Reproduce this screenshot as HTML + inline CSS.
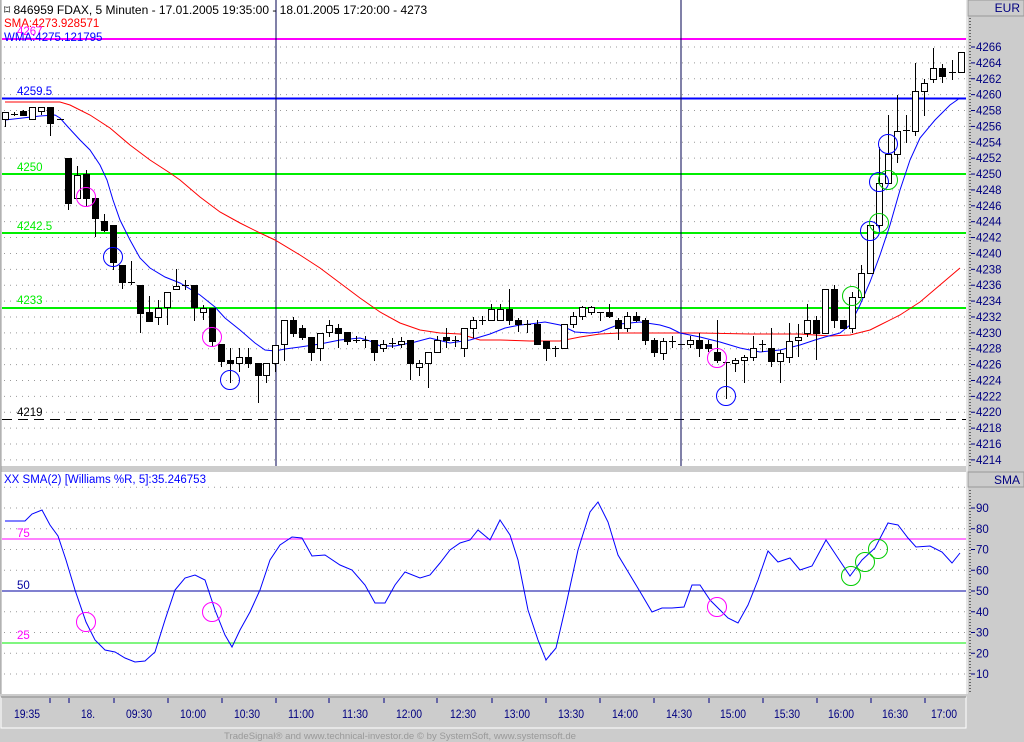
<!DOCTYPE html>
<html><head><meta charset="utf-8"><style>
html,body{margin:0;padding:0;background:#cccccc;width:1024px;height:742px;overflow:hidden}
svg{display:block;font-family:"Liberation Sans",sans-serif}
</style></head><body>
<svg id="s" width="1024" height="742" viewBox="0 0 1024 742" xmlns="http://www.w3.org/2000/svg">
<rect x="0" y="0" width="1024" height="742" fill="#cccccc"/>
<rect x="1" y="0" width="965" height="466" fill="#fff"/>
<rect x="1" y="472" width="965" height="222" fill="#fff"/>
<line x1="1" y1="0" x2="1" y2="694" stroke="#999"/>
<line x1="967" y1="0" x2="967" y2="694" stroke="#fff"/>
<g id="grid"></g>
<!-- axis boxes -->
<rect x="968" y="0" width="56" height="16" fill="#cccccc" stroke="#999"/>
<text x="1020" y="12" font-size="12" fill="#000080" text-anchor="end">EUR</text>
<rect x="968" y="472" width="56" height="15" fill="#cccccc" stroke="#999"/>
<text x="1020" y="484" font-size="12" fill="#000080" text-anchor="end">SMA</text>
<g id="axis"></g>
<!-- time axis -->
<rect x="1" y="697" width="965" height="31" fill="#cccccc" stroke="#fff"/>
<line x1="1" y1="697" x2="966" y2="697" stroke="#888"/>
<g id="time"></g>
<text x="400" y="739" font-size="9.5" fill="#999" text-anchor="middle" textLength="352" lengthAdjust="spacingAndGlyphs">TradeSignal® and www.technical-investor.de © by SystemSoft, www.systemsoft.de</text>
<!-- horizontal levels -->
<line x1="2" y1="39" x2="966" y2="39" stroke="#ff00ff" stroke-width="2"/>
<line x1="2" y1="98.5" x2="966" y2="98.5" stroke="#0000ff" stroke-width="2"/>
<line x1="2" y1="174" x2="966" y2="174" stroke="#00ee00" stroke-width="2"/>
<line x1="2" y1="233" x2="966" y2="233" stroke="#00ee00" stroke-width="2"/>
<line x1="2" y1="308" x2="966" y2="308" stroke="#00ee00" stroke-width="2"/>
<line x1="2" y1="419.5" x2="966" y2="419.5" stroke="#000" stroke-dasharray="10,6"/>
<line x1="276" y1="0" x2="276" y2="466" stroke="#000050"/>
<line x1="681" y1="0" x2="681" y2="466" stroke="#000050"/>
<text x="4" y="14" font-size="12" fill="#000">⌑ 846959  FDAX, 5 Minuten - 17.01.2005 19:35:00 - 18.01.2005 17:20:00 - 4273</text>
<text x="4" y="27" font-size="11.5" fill="#ff0000">SMA:4273.928571</text>
<text x="17" y="35" font-size="11.5" fill="#ff00ff">4267</text>
<text x="4" y="41" font-size="11.5" fill="#0000ff">WMA:4275.121795</text>
<text x="17" y="95" font-size="11.5" fill="#0000ff">4259.5</text>
<text x="17" y="171" font-size="11.5" fill="#00ee00">4250</text>
<text x="17" y="230" font-size="11.5" fill="#00ee00">4242.5</text>
<text x="17" y="304" font-size="11.5" fill="#00ee00">4233</text>
<text x="17" y="416" font-size="11.5" fill="#000">4219</text>
<g id="lines"></g>
<g id="candles"></g>
<g id="circ"></g>
<!-- indicator -->
<text x="4" y="483" font-size="11.5" fill="#0000ff">XX SMA(2) [Williams %R, 5]:35.246753</text>
<line x1="2" y1="539" x2="966" y2="539" stroke="#ff00ff"/>
<line x1="2" y1="591" x2="966" y2="591" stroke="#0000a0"/>
<line x1="2" y1="643" x2="966" y2="643" stroke="#00ee00"/>
<text x="17" y="537" font-size="11.5" fill="#ff00ff">75</text>
<text x="17" y="589" font-size="11.5" fill="#0000a0">50</text>
<text x="17" y="639" font-size="11.5" fill="#ff00ff">25</text>
<g id="ind"></g>
</svg>
<script>
var NS="http://www.w3.org/2000/svg";
function el(g,t,a,txt){var e=document.createElementNS(NS,t);for(var k in a)e.setAttribute(k,a[k]);if(txt!=null)e.textContent=txt;document.getElementById(g).appendChild(e);return e;}
// grid
for(var p=4266;p>=4214;p-=2){var y=47+(4266-p)*7.94;el("grid","line",{x1:4,y1:y,x2:966,y2:y,stroke:"#999","stroke-dasharray":"1,5"});
el("axis","line",{x1:971,y1:y,x2:975,y2:y,stroke:"#000080"});
el("axis","text",{x:976,y:y+4,"font-size":"11.5",fill:"#000080"},""+p);}
for(var p=4268;p>=4216;p-=2){var y=47+(4266-p)*7.94-7.94;}
el("axis","line",{x1:970,y1:18,x2:970,y2:466,stroke:"#000","stroke-dasharray":"1,2"});
for(var v=100;v>=10;v-=10){var y=508+(90-v)*2.075;el("grid","line",{x1:4,y1:y,x2:966,y2:y,stroke:"#999","stroke-dasharray":"1,5"});
if(v<100){el("axis","line",{x1:971,y1:y,x2:975,y2:y,stroke:"#000080"});el("axis","text",{x:976,y:y+4,"font-size":"11.5",fill:"#000080"},""+v);}}
el("axis","line",{x1:970,y1:490,x2:970,y2:694,stroke:"#000","stroke-dasharray":"1,2"});
// time axis
[50,69,114,168,222,276,329,384,437,492,546,600,654,709,763,817,871,925].forEach(function(x){el("time","line",{x1:x,y1:698,x2:x,y2:703,stroke:"#000080"});});
[[27,"19:35"],[88,"18."],[139,"09:30"],[193,"10:00"],[247,"10:30"],[301,"11:00"],[355,"11:30"],[409,"12:00"],[463,"12:30"],[517,"13:00"],[571,"13:30"],[625,"14:00"],[679,"14:30"],[733,"15:00"],[787,"15:30"],[841,"16:00"],[895,"16:30"],[944,"17:00"]].forEach(function(a){el("time","text",{x:a[0],y:718,"font-size":"12",fill:"#000080","text-anchor":"middle",textLength:a[1].length>3?26:14,lengthAdjust:"spacingAndGlyphs"},a[1]);});
function poly(g,pts,c,w){el(g,"polyline",{points:pts.map(function(p){return p.join(",")}).join(" "),fill:"none",stroke:c,"stroke-width":w||1});}
poly("lines",[[5,102],[60,102],[70,105],[90,115],[110,128],[130,145],[150,160],[170,173],[180,180],[200,197],[220,212],[240,223],[260,233],[275,240],[300,255],[320,268],[340,283],[360,298],[380,312],[400,323],[420,330],[440,333],[460,334],[480,340],[500,340],[530,341],[560,341],[580,337],[600,334],[620,333],[650,333],[700,333],[750,334],[800,334],[830,336],[850,335],[870,330],[880,325],[900,315],[920,302],[940,285],[960,268]],"#ff0000");
poly("lines",[[5,120],[40,116],[55,115],[60,118],[68,127],[80,140],[90,150],[100,165],[107,180],[113,200],[120,220],[130,240],[140,258],[150,268],[165,277],[180,283],[200,295],[215,307],[225,318],[240,330],[255,343],[265,350],[275,351],[285,349],[300,347],[320,344],[330,342],[340,340],[360,338],[370,341],[380,346],[395,346],[415,342],[430,338],[450,343],[470,340],[490,334],[505,328],[520,325],[530,324],[545,322],[560,325],[575,332],[590,333],[600,332],[610,328],[620,324],[640,322],[660,325],[670,328],[680,333],[700,337],[720,342],[740,348],[760,352],[780,350],[800,345],[815,340],[825,337],[840,333],[850,325],[860,305],[870,282],[880,255],[890,225],[900,190],[910,160],[920,138],[935,120],[950,105],[960,98]],"#0000ff");
// candles: x, wickTop, wickBot, bodyTop, bodyBot, filled
var C=[[5,112,127,112,119,0],[14,112,116,114,114,0],[23,110,116,111,115,1],[32,107,119,107,119,0],[41,107,115,107,111,0],[50,107,136,107,123,1],[60,119,119,119,119,0],
[68,158,210,158,203,1],[77,166,198,175,198,0],[86,170,207,174,198,1],[95,198,237,198,218,1],[104,214,232,221,230,1],[113,225,270,225,262,1],[122,265,289,265,282,1],[131,261,285,282,282,0],[140,285,333,285,313,1],[149,296,321,312,321,1],[158,300,325,308,317,0],[167,292,325,292,307,0],[176,269,289,286,289,0],[185,280,290,285,285,0],[194,285,321,285,307,1],[203,305,320,308,312,0],[212,308,347,308,341,1],[221,344,367,344,361,1],[230,348,383,360,363,1],[239,348,372,357,363,0],[248,348,368,357,363,1],[258,363,403,363,375,1],[266,363,383,363,375,0],[275,345,372,345,363,0],[284,320,361,320,344,0],[293,317,337,320,333,1],[302,325,340,328,337,1],[311,337,361,337,352,1],[320,333,361,333,348,0],[329,320,337,325,332,0],[338,324,348,328,333,1],[347,332,345,332,341,1],[356,336,343,340,340,0],[365,336,348,340,340,0],[374,340,361,340,352,1],[383,340,352,344,348,0],[392,338,348,343,343,0],[401,337,348,341,344,0],[410,340,380,340,363,1],[419,360,376,363,367,0],[428,352,388,352,363,0],[437,336,352,340,352,0],[446,328,348,337,340,1],[455,336,347,340,340,0],[464,328,357,328,348,0],[473,317,338,320,328,0],[482,316,325,320,320,0],[491,304,320,309,320,0],[500,304,320,309,320,0],[509,289,325,309,320,1],[518,318,332,320,324,1],[527,320,333,324,324,0],[537,320,344,324,344,1],[546,341,361,341,348,1],[555,346,357,348,348,0],[564,324,348,324,348,0],[573,312,328,316,324,0],[582,306,320,307,316,0],[591,306,315,307,312,0],[600,312,321,312,312,0],[609,304,318,312,316,1],[618,318,340,320,328,1],[627,312,332,316,328,0],[636,312,322,316,320,1],[645,318,345,320,340,1],[654,338,357,340,352,1],[663,338,360,341,353,0],[672,336,348,341,341,0],[681,344,344,344,344,0],[690,336,348,340,344,0],[699,333,357,340,348,1],[708,340,352,344,348,1],[717,320,363,352,360,1],[726,362,399,362,362,0],[735,358,372,360,363,0],[744,355,383,357,360,0],[753,336,361,348,357,0],[762,340,352,344,344,0],[771,328,367,348,361,1],[780,350,383,353,361,0],[789,323,363,341,357,0],[798,324,357,337,340,0],[807,304,337,320,333,0],[816,316,360,320,333,1],[825,289,333,289,333,0],[834,285,328,289,320,1],[843,320,328,320,328,1],[852,292,333,297,328,0],[861,265,297,273,297,0],[870,225,273,225,273,0],[879,147,230,183,225,0],[888,115,183,154,183,0],[897,95,163,131,154,0],[906,115,143,130,130,0],[915,63,136,91,131,0],[924,79,116,83,91,0],[933,48,83,68,79,0],[942,64,83,68,76,1],[952,60,80,72,72,0],[961,52,72,52,72,0]];
C.forEach(function(c){var x=c[0];el("candles","line",{x1:x+.5,y1:c[1],x2:x+.5,y2:c[2],stroke:"#000"});
if(c[4]-c[3]<1){el("candles","line",{x1:x-3,y1:c[3]+.5,x2:x+4,y2:c[3]+.5,stroke:"#000"});}
else el("candles","rect",{x:x-2.5,y:c[3]+.5,width:6,height:c[4]-c[3],fill:c[5]?"#000":"#fff",stroke:"#000"});});
function ci(g,x,y,c){el(g,"circle",{cx:x,cy:y,r:9.5,fill:"none",stroke:c});}
[[86,197],[212,337],[717,358]].forEach(function(p){ci("circ",p[0],p[1],"#ff00ff")});
[[113,257],[230,380],[726,396],[888,144],[879,182],[870,231]].forEach(function(p){ci("circ",p[0],p[1],"#0000ff")});
[[852,296],[879,223],[888,180]].forEach(function(p){ci("circ",p[0],p[1],"#00cc00")});
poly("ind",[[5,521],[25,521],[32,514],[42,510],[50,525],[58,536],[66,560],[75,590],[86,622],[95,640],[105,650],[115,652],[125,658],[135,662],[145,661],[155,652],[165,620],[175,590],[185,578],[195,575],[205,580],[215,610],[225,635],[232,647],[240,630],[250,612],[260,590],[270,560],[280,545],[292,537],[302,538],[312,556],[325,555],[340,565],[352,570],[365,585],[375,603],[385,603],[395,585],[405,572],[420,578],[430,575],[440,563],[450,550],[460,543],[470,540],[478,530],[490,540],[500,520],[510,535],[518,560],[528,610],[538,640],[546,660],[556,648],[566,605],[578,550],[590,512],[598,502],[608,522],[618,555],[630,575],[642,595],[652,612],[662,608],[672,608],[684,607],[692,585],[700,585],[710,600],[718,608],[728,618],[738,623],[748,605],[758,580],[768,551],[778,562],[790,558],[800,570],[812,566],[826,540],[836,555],[850,576],[862,560],[875,548],[888,523],[898,525],[908,538],[916,547],[930,546],[942,552],[952,563],[960,553]],"#0000ff");
[[86,622],[212,612],[717,607]].forEach(function(p){ci("ind",p[0],p[1],"#ff00ff")});
[[851,576],[865,562],[878,549]].forEach(function(p){ci("ind",p[0],p[1],"#00cc00")});
</script>
</body></html>
